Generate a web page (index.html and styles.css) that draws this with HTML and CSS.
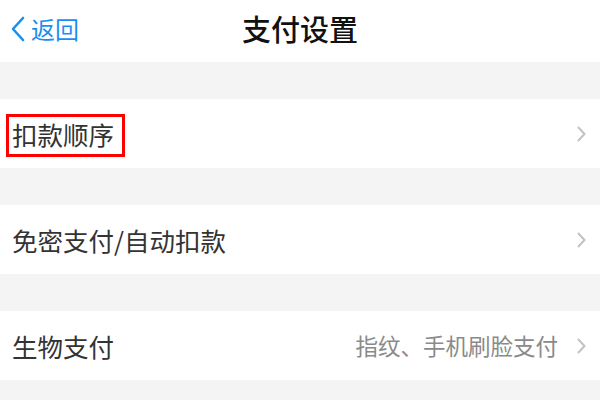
FILE: index.html
```html
<!DOCTYPE html>
<html lang="zh-CN">
<head>
<meta charset="utf-8">
<link rel="stylesheet" href="styles.css">
</head>
<body>
<div class="page">
  <header class="nav">
    <div class="back">
      <svg class="back-icon" width="16" height="26" viewBox="0 0 16 26"><path d="M13 2 L3 13 L13 24" fill="none" stroke="#1a8ff0" stroke-width="2.6" stroke-linecap="round" stroke-linejoin="round"/></svg>
      <span class="back-text">返回</span>
    </div>
    <h1 class="title">支付设置</h1>
  </header>
  <div class="gap"></div>
  <div class="row">
    <span class="label highlighted">扣款顺序</span>
    <span class="right"><svg class="chev" width="11" height="18" viewBox="0 0 11 18"><path d="M2 2 L8.5 9 L2 16" fill="none" stroke="#c2c2c6" stroke-width="2"/></svg></span>
  </div>
  <div class="gap"></div>
  <div class="row">
    <span class="label">免密支付/自动扣款</span>
    <span class="right"><svg class="chev" width="11" height="18" viewBox="0 0 11 18"><path d="M2 2 L8.5 9 L2 16" fill="none" stroke="#c2c2c6" stroke-width="2"/></svg></span>
  </div>
  <div class="gap"></div>
  <div class="row">
    <span class="label">生物支付</span>
    <span class="right"><span class="value">指纹、手机刷脸支付</span><svg class="chev" width="11" height="18" viewBox="0 0 11 18"><path d="M2 2 L8.5 9 L2 16" fill="none" stroke="#c2c2c6" stroke-width="2"/></svg></span>
  </div>
  <div class="gap tail"></div>
</div>
</body>
</html>
```
FILE: styles.css
```css
html, body {
  margin: 0;
  padding: 0;
  background: #f4f4f4;
}
body {
  font-family: "Noto Sans CJK SC", "Noto Sans", sans-serif;
  width: 600px;
  height: 400px;
  overflow: hidden;
}
.page {
  display: flex;
  flex-direction: column;
}
.nav {
  height: 62px;
  background: #fff;
  display: flex;
  align-items: center;
  justify-content: center;
  position: relative;
}
.back {
  position: absolute;
  left: 10px;
  top: 0;
  height: 58px;
  display: flex;
  align-items: center;
  gap: 5px;
}
.back-text {
  color: #1a8ff0;
  font-size: 24px;
  line-height: 1;
}
.title {
  margin: 0 0 6px 0;
  font-size: 29px;
  font-weight: 500;
  color: #111;
  line-height: 1;
}
.gap {
  height: 37px;
  background: #f4f4f4;
}
.tail {
  height: 19px;
}
.row {
  height: 69px;
  background: #fff;
  display: flex;
  align-items: center;
  justify-content: space-between;
  padding: 0 13px 0 12px;
}
.label {
  font-size: 25.5px;
  color: #333;
  line-height: 1;
}
.highlighted {
  position: relative;
}
.highlighted::after {
  content: "";
  position: absolute;
  left: -6px;
  right: -11px;
  top: -7px;
  bottom: -11px;
  border: 3px solid #f00;
}
.right {
  display: flex;
  align-items: center;
  gap: 18px;
}
.value {
  font-size: 22.5px;
  color: #8a8a8a;
  line-height: 1;
}
.chev {
  display: block;
}
```
